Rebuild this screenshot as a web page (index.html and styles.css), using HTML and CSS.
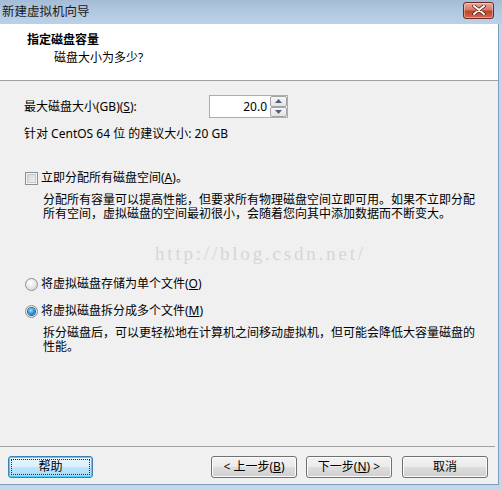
FILE: index.html
```html
<!DOCTYPE html>
<html lang="zh-CN">
<head>
<meta charset="utf-8">
<title>新建虚拟机向导</title>
<link rel="stylesheet" href="styles.css">
</head>
<body>
<div class="window">
  <div class="titlebar">
    <span class="title">新建虚拟机向导</span>
    <span class="close">
      <svg width="14" height="10" viewBox="0 0 14 10"><path d="M2 1 L12 9 M12 1 L2 9" stroke="#4a1410" stroke-width="3.4" stroke-linecap="round"/><path d="M2 1 L12 9 M12 1 L2 9" stroke="#ffffff" stroke-width="2" stroke-linecap="round"/></svg>
    </span>
  </div>
  <div class="frame">
    <div class="client">
      <div class="header">
        <div class="h-title">指定磁盘容量</div>
        <div class="h-sub">磁盘大小为多少?</div>
      </div>
      <div class="content">
        <div class="row-size">
          <span class="label">最大磁盘大小(GB)(<u>S</u>):</span>
          <div class="spin">
            <div class="spin-field">20.0</div>
            <div class="spin-btns">
              <div class="spin-btn"><svg width="7" height="4" viewBox="0 0 7 4"><path d="M0 4 L3.5 0 L7 4Z" fill="#4d6185"/></svg></div>
              <div class="spin-btn"><svg width="7" height="4" viewBox="0 0 7 4"><path d="M0 0 L3.5 4 L7 0Z" fill="#4d6185"/></svg></div>
            </div>
          </div>
        </div>
        <div class="row-rec">针对 CentOS 64 位 的建议大小: 20 GB</div>
        <div class="row-check">
          <span class="checkbox"></span>
          <span class="label">立即分配所有磁盘空间(<u>A</u>)。</span>
        </div>
        <div class="desc desc-1">分配所有容量可以提高性能，但要求所有物理磁盘空间立即可用。如果不立即分配<br>所有空间，虚拟磁盘的空间最初很小，会随着您向其中添加数据而不断变大。</div>
        <div class="watermark">http://blog.csdn.net/</div>
        <div class="row-radio radio-1">
          <span class="radio"></span>
          <span class="label">将虚拟磁盘存储为单个文件(<u>O</u>)</span>
        </div>
        <div class="row-radio radio-2">
          <span class="radio checked"></span>
          <span class="label">将虚拟磁盘拆分成多个文件(<u>M</u>)</span>
        </div>
        <div class="desc desc-2">拆分磁盘后，可以更轻松地在计算机之间移动虚拟机，但可能会降低大容量磁盘的<br>性能。</div>
      </div>
      <div class="footer">
        <div class="buttons">
          <div class="btn btn-default"><span class="focus">帮助</span></div>
          <div class="spacer"></div>
          <div class="btn">&lt; 上一步(<u>B</u>)</div>
          <div class="btn btn-next">下一步(<u>N</u>) &gt;</div>
          <div class="btn btn-cancel">取消</div>
        </div>
      </div>
    </div>
  </div>
</div>
</body>
</html>
```

FILE: styles.css
```css
* { box-sizing: border-box; }
html, body {
  margin: 0;
  padding: 0;
}
body {
  width: 502px;
  height: 489px;
  overflow: hidden;
  font-family: "Noto Sans", "Noto Sans CJK SC", sans-serif;
  font-size: 12px;
  color: #000;
}
u { text-decoration: underline; text-underline-offset: 1px; }

.window {
  width: 502px;
  height: 489px;
  display: flex;
  flex-direction: column;
  background: #c3d7ec;
}
.titlebar {
  height: 24px;
  flex: none;
  display: flex;
  align-items: center;
  justify-content: space-between;
  padding: 0 8px 0 2px;
  background: linear-gradient(#a4bcd6, #b2c9e2 50%, #bad1e9);
}
.title {
  font-size: 12.5px;
  color: #1a1a1a;
  line-height: 16px;
  margin-top: -1px;
}
.close {
  width: 31px;
  height: 17px;
  margin-top: -4px;
  border: 1px solid #6e2a22;
  border-radius: 3px;
  display: flex;
  align-items: center;
  justify-content: center;
  background: linear-gradient(#e9a99c, #d47a68 45%, #c2412b 55%, #d26a4f);
  box-shadow: inset 0 0 0 1px rgba(255,255,255,0.35);
}
.frame {
  flex: 1;
  padding: 0 3px 4px 0;
  display: flex;
}
.client {
  flex: 1;
  display: flex;
  flex-direction: column;
  background: #f0f0f0;
  border-right: 1px solid #7f9db9;
  border-bottom: 1px solid #7f9db9;
}
.header {
  height: 57px;
  flex: none;
  background: #fff;
  border-bottom: 1px solid #a0a0a0;
  padding: 8px 0 0 27px;
}
.h-title {
  font-weight: bold;
  line-height: 16px;
}
.h-sub {
  margin: 2px 0 0 27px;
  line-height: 16px;
}
.content {
  flex: 1;
  padding: 14px 0 0 24px;
}
.row-size {
  height: 23px;
  display: flex;
  align-items: center;
}
.row-size .label { width: 185px; line-height: 16px; }
.spin {
  display: flex;
  height: 23px;
  width: 79px;
  border: 1px solid #abadb3;
  background: #fff;
}
.spin-field {
  flex: 1;
  text-align: right;
  padding-right: 3px;
  line-height: 21px;
}
.spin-btns {
  width: 17px;
  display: flex;
  flex-direction: column;
}
.spin-btn {
  flex: 1;
  border: 1px solid #a3a3a3;
  border-radius: 2px;
  background: linear-gradient(#f6f6f6, #e4e4e4);
  display: flex;
  align-items: center;
  justify-content: center;
}
.row-rec {
  margin-top: 8px;
  line-height: 16px;
}
.row-check, .row-radio {
  display: flex;
  align-items: center;
  height: 16px;
}
.row-check { margin-top: 28px; }
.checkbox {
  width: 13px;
  height: 13px;
  margin-left: 1px;
  border: 1px solid #8e8f8f;
  background: linear-gradient(135deg, #d2d3d4, #f3f3f3);
  box-shadow: inset 0 0 0 1px #f4f4f4, inset 0 0 0 2px #c8c9cb;
}
.row-check .label, .row-radio .label { margin-left: 3px; line-height: 16px; }
.desc {
  margin: 7px 0 0 19px;
  line-height: 14px;
}
.watermark {
  margin: 23px 0 0 131px;
  font-family: "Liberation Serif", serif;
  font-size: 19px;
  line-height: 20px;
  letter-spacing: 2.8px;
  color: #d6d6d6;
}
.radio-1 { margin-top: 12px; }
.radio-2 { margin-top: 11px; }
.radio {
  width: 13px;
  height: 13px;
  margin-left: 1px;
  border-radius: 50%;
  border: 1px solid #8e8f8f;
  background: radial-gradient(circle at 40% 35%, #ffffff, #d8d9da 80%);
  position: relative;
}
.radio.checked {
  background: radial-gradient(circle at 40% 35%, #ffffff, #e0e0e0 80%);
}
.radio.checked::after {
  content: "";
  position: absolute;
  left: 2px;
  top: 2px;
  width: 7px;
  height: 7px;
  border-radius: 50%;
  background: radial-gradient(circle at 40% 35%, #9be3ff, #1c88d0 60%, #0b5aa2);
  box-shadow: 0 0 0 1px #1f5fa0;
}
.footer {
  flex: none;
  height: 38px;
  padding: 0 3px 6px 0;
}
.footer::before {
  content: "";
  display: block;
  height: 1px;
  background: #a0a0a0;
}
.buttons {
  margin-top: 9px;
  display: flex;
  padding-left: 8px;
}
.spacer { flex: 1; }
.btn {
  width: 86px;
  height: 22px;
  border: 1px solid #707070;
  border-radius: 3px;
  background: linear-gradient(#f2f2f2, #ebebeb 48%, #dddddd 52%, #cfcfcf);
  box-shadow: inset 0 0 0 1px #fcfcfc;
  display: flex;
  align-items: center;
  justify-content: center;
  line-height: 16px;
}
.btn-next { margin-left: 9px; }
.btn-cancel { margin-left: 10px; margin-right: 7px; }
.btn-default {
  width: 85px;
  border-color: #3c7fb1;
  background: linear-gradient(#eaf6fd, #d9f0fc 48%, #bee6fd 52%, #a7d9f5);
  box-shadow: inset 0 0 0 1px #48d0ff;
  padding: 2px;
}
.focus {
  flex: 1;
  align-self: stretch;
  border: 1px dotted #6b0f0f;
  display: flex;
  align-items: center;
  justify-content: center;
}
```
